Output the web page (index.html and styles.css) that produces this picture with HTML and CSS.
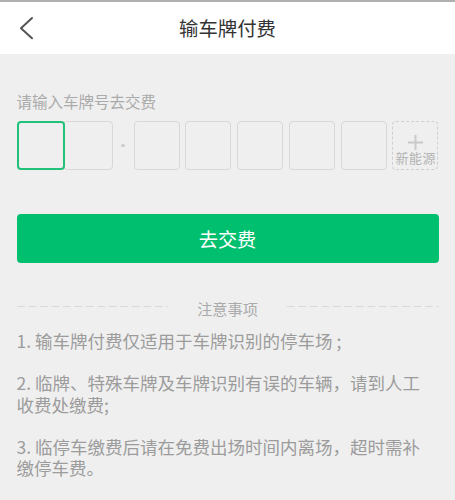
FILE: index.html
```html
<!DOCTYPE html>
<html lang="zh-CN">
<head>
<meta charset="utf-8">
<title>输车牌付费</title>
<link rel="stylesheet" href="styles.css">
</head>
<body>
<header class="header">
  <div class="back">
    <svg width="16" height="24" viewBox="0 0 16 24"><polyline points="13,2 2,12.3 13,22.3" fill="none" stroke="#555" stroke-width="2" stroke-linecap="round" stroke-linejoin="round"/></svg>
  </div>
  <h1 class="title">输车牌付费</h1>
  <div></div>
</header>
<main class="main">
  <div class="label">请输入车牌号去交费</div>
  <div class="plates">
    <div class="plate plate-first"></div>
    <div class="plate plate-second"></div>
    <div class="dot-slot"><span class="dot"></span></div>
    <div class="plate-group">
      <div class="plate"></div>
      <div class="plate"></div>
      <div class="plate"></div>
      <div class="plate"></div>
      <div class="plate"></div>
      <div class="plate plate-new">
        <svg class="plus" width="15" height="15" viewBox="0 0 15 15"><path d="M7.5 0V15M0 7.5H15" stroke="#c9c9c9" stroke-width="2"/></svg>
        <span class="new-text">新能源</span>
      </div>
    </div>
  </div>
  <button class="pay">去交费</button>
  <div class="divider">
    <span class="dash"></span>
    <span class="divider-text">注意事项</span>
    <span class="dash"></span>
  </div>
  <div class="notes">
    <p>1. 输车牌付费仅适用于车牌识别的停车场 ;</p>
    <p>2. 临牌、特殊车牌及车牌识别有误的车辆，请到人工收费处缴费;</p>
    <p>3. 临停车缴费后请在免费出场时间内离场，超时需补缴停车费。</p>
  </div>
</main>
</body>
</html>
```
FILE: styles.css
```css
html, body {
  margin: 0;
  padding: 0;
}
body {
  background: #efefef;
  font-family: "Noto Sans CJK SC", "Noto Sans", sans-serif;
  width: 455px;
  height: 500px;
  overflow: hidden;
}
.header {
  border-top: 2px solid #b0b0b0;
  background: #fff;
  height: 52px;
  display: grid;
  grid-template-columns: 1fr auto 1fr;
  align-items: center;
}
.back {
  padding-left: 19px;
  display: flex;
  align-items: center;
}
.back svg {
  display: block;
}
.title {
  margin: 0;
  font-size: 19.4px;
  font-weight: normal;
  color: #333;
  line-height: 52px;
}
.main {
  padding: 36.5px 16.5px 0;
}
.label {
  font-size: 15.5px;
  line-height: 20px;
  color: #aaa;
}
.plates {
  margin-top: 10px;
  display: flex;
  height: 49.5px;
}
.plate {
  box-sizing: border-box;
  border: 1.5px solid #d8d8d8;
  border-radius: 4px;
  width: 46px;
  height: 49.5px;
}
.plate-first {
  width: 48px;
  border: 2px solid #22c17a;
  position: relative;
  z-index: 1;
}
.plate-second {
  width: 49.5px;
  margin-left: -1.5px;
}
.dot-slot {
  flex: 0 0 21px;
  display: flex;
  align-items: center;
  justify-content: center;
}
.dot {
  width: 3.5px;
  height: 3.5px;
  border-radius: 50%;
  background: #cdcdcd;
}
.plate-group {
  display: flex;
  gap: 5.8px;
}
.plate-new {
  border: 1.5px dashed #cfcfcf;
  display: flex;
  flex-direction: column;
  align-items: center;
  padding-top: 13.5px;
}
.plus {
  display: block;
}
.new-text {
  margin-top: 1px;
  font-size: 13px;
  letter-spacing: 0.5px;
  line-height: 14px;
  color: #b3b3b3;
  white-space: nowrap;
  margin-right: -0.5px;
}
.pay {
  display: block;
  width: 100%;
  margin-top: 44px;
  height: 49px;
  border: none;
  border-radius: 4px;
  background: #00c070;
  color: #fff;
  font-family: inherit;
  font-size: 19.2px;
  padding: 0;
}
.divider {
  margin-top: 35px;
  display: flex;
  align-items: center;
  gap: 29.5px;
}
.dash {
  flex: 1;
  height: 1px;
  margin-bottom: 4px;
  background-image: linear-gradient(to right, #d9d9d9 8px, transparent 8px);
  background-size: 11.5px 1px;
}
.divider-text {
  font-size: 15.2px;
  line-height: 20px;
  color: #aaa;
}
.notes {
  margin-top: 12px;
  padding-right: 12px;
  font-size: 17.5px;
  line-height: 21.6px;
  color: #9c9c9c;
}
.notes p {
  margin: 0 0 20.5px;
}
```
